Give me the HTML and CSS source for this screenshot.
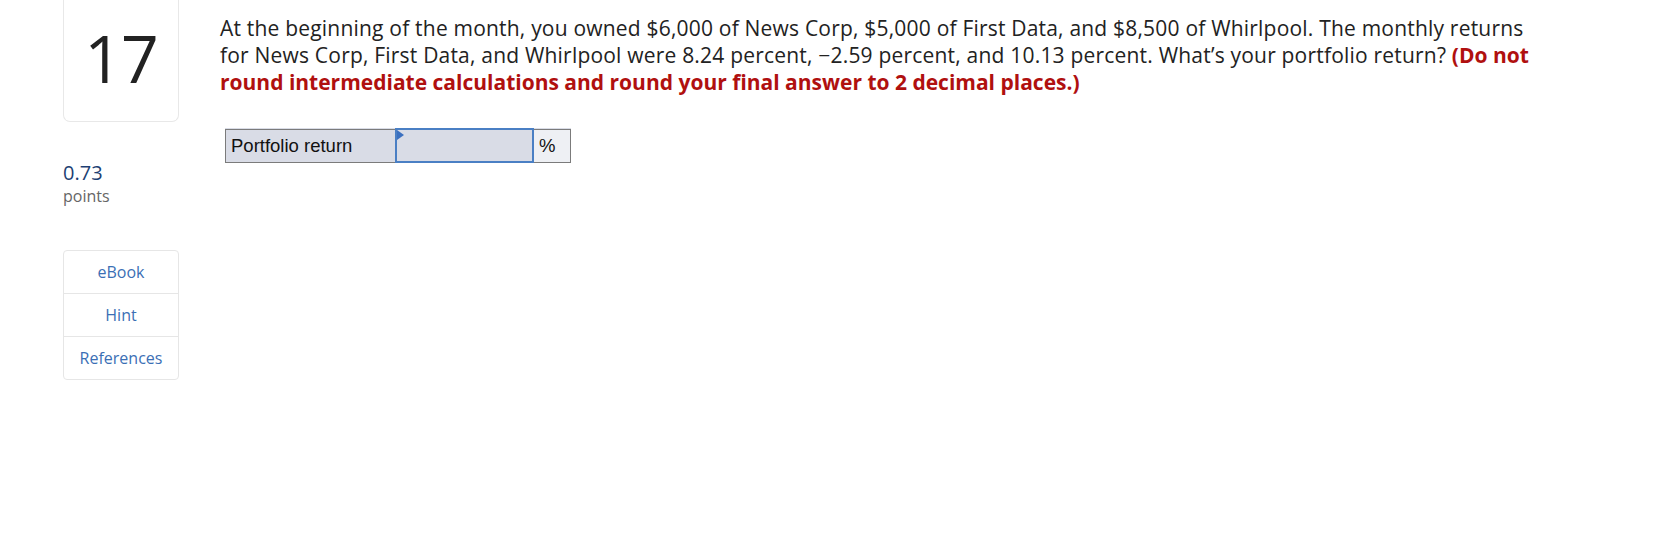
FILE: index.html
```html
<!DOCTYPE html>
<html>
<head>
<meta charset="utf-8">
<link rel="stylesheet" href="styles.css">
</head>
<body>
<div class="page">
  <aside class="side">
    <div class="qnum">17</div>
    <div class="points"><span class="pval">0.73</span><span class="plabel">points</span></div>
    <div class="tools">
      <div class="tool">eBook</div>
      <div class="tool">Hint</div>
      <div class="tool">References</div>
    </div>
  </aside>
  <main class="question">
    <p class="prompt">At the beginning of the month, you owned $6,000 of News Corp, $5,000 of First Data, and $8,500 of Whirlpool. The monthly returns for News Corp, First Data, and Whirlpool were 8.24 percent, &minus;2.59 percent, and 10.13 percent. What&rsquo;s your portfolio return? <strong class="note">(Do not round intermediate calculations and round your final answer to 2 decimal places.)</strong></p>
    <table class="answer">
      <tr>
        <td class="label">Portfolio return</td>
        <td class="input"><span class="flag"></span></td>
        <td class="unit">%</td>
      </tr>
    </table>
  </main>
</div>
</body>
</html>
```
FILE: styles.css
```css
html, body { margin: 0; padding: 0; background: #fff; }
body { font-family: "Open Sans", "Liberation Sans", sans-serif; color: #222; }
.page { display: flex; padding-left: 63px; gap: 41px; }
.side { width: 116px; flex: none; display: flex; flex-direction: column; }
.qnum {
  height: 122px; box-sizing: border-box;
  border: 1px solid #e8e8e8; border-top: none;
  border-radius: 0 0 7px 7px;
  display: flex; align-items: center; justify-content: center;
  font-size: 66px; color: #222; padding-bottom: 8px;
  letter-spacing: -1px;
}
.points { display: flex; flex-direction: column; margin-top: 39px; }
.pval { font-size: 20px; color: #1d3f73; line-height: 24px; }
.plabel { font-size: 16px; color: #666; line-height: 22px; }
.tools { margin-top: 43px; border: 1px solid #e6e6e6; border-radius: 4px; }
.tool {
  height: 42px; display: flex; align-items: center; justify-content: center;
  font-size: 16px; color: #3b6fb5; border-top: 1px solid #e6e6e6;
}
.tool:first-child { border-top: none; }
.question { width: 1325px; }
.prompt { margin: 15px 0 0; font-size: 21px; line-height: 27px; letter-spacing: 0.2px; color: #222; }
.note { color: #b0100f; font-weight: 700; letter-spacing: 0; }
.answer {
  margin: 32px 0 0 5px; border-collapse: collapse;
  border: 1px solid #7b7b7b; background: #d9dce6;
  font-family: "Liberation Sans", Arial, sans-serif; font-size: 18.5px; color: #111;
}
.answer td { height: 31px; padding: 0; }
.label { width: 164px; padding-left: 5px !important; border-right: 1px solid #7b7b7b; }
.input { width: 135px; border: 2px solid #4a7fc4; position: relative; }
.flag {
  position: absolute; left: 0; top: 0; width: 0; height: 0;
  border-top: 5px solid transparent; border-bottom: 5px solid transparent;
  border-left: 7px solid #3b70c0;
}
.unit { width: 31px; padding-left: 5px !important; background: #eef0f4; border-left: 1px solid #7b7b7b; }
```
